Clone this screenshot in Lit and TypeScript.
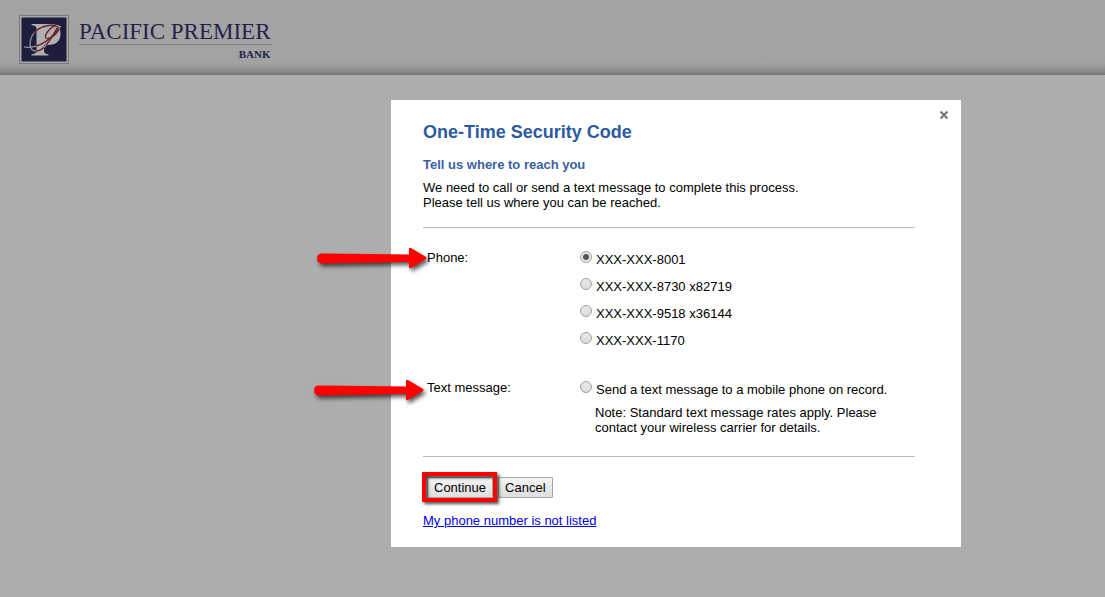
import { LitElement, html, css, svg } from "lit";
import { customElement, state } from "lit/decorators.js";

const PHONES = [
  { id: "p1", label: "XXX-XXX-8001" },
  { id: "p2", label: "XXX-XXX-8730 x82719" },
  { id: "p3", label: "XXX-XXX-9518 x36144" },
  { id: "p4", label: "XXX-XXX-1170" },
];

@customElement("bank-header")
class BankHeader extends LitElement {
  static styles = css`
    :host {
      display: block;
    }
    .bar {
      box-sizing: border-box;
      display: flex;
      align-items: flex-start;
      gap: 10px;
      height: 75px;
      padding: 15px 19px 0;
      background: linear-gradient(#a3a3a3 0, #a3a3a3 62px, #9a9a9a 66px, #868686 72px, #777 75px);
    }
    .mark {
      display: block;
      width: 50px;
      height: 49px;
    }
    .name {
      display: flex;
      flex-direction: column;
      padding-top: 4px;
      color: #23234a;
      font-family: "Liberation Serif", serif;
    }
    .title {
      padding: 0 1px 0 0;
      border-bottom: 1px solid #7f7f84;
      font-size: 23px;
      line-height: 25px;
    }
    .sub {
      padding: 2px 1px 0 0;
      font-size: 11px;
      font-weight: bold;
      line-height: 14px;
      text-align: right;
    }
  `;

  render() {
    return html`
      <header class="bar">
        <svg class="mark" viewBox="0 0 50 49" aria-hidden="true">
          <defs>
            <clipPath id="inner">
              <path d="M12 9H30Q42 9.500 42 19Q41 30 29 30H25V40H17V30H15V14H12Z" />
            </clipPath>
          </defs>
          <rect x="0.5" y="0.5" width="49" height="48" fill="#a9a9a9" stroke="#77777c" />
          <rect x="2.500" y="2.500" width="45" height="44" fill="#1e1d3e" />
          <path
            d="M12.500 9H30Q42 9.500 41.500 19Q41 30 29 30H25V36Q25 39 29.500 39.300V40.500H12.500V39.300Q17.500 39 17.500 36V13Q17 10.500 12.500 10Z"
            fill="#b0b0b0"
          />
          <g fill="none" stroke="#9c9ca4" stroke-width="1.200">
            <path d="M5 32C19 34 30 25 36 18C39 14 40 11 37 11C32 11 24 21 27 23C31 25 40 18 41 11" />
            <path d="M42 12C38 9 22 9 15 18C9 26 10 36 17 36C24 36 28 29 33 22L38 13" />
          </g>
          <g fill="none" stroke="#6c2229" stroke-width="1.300" clip-path="url(#inner)">
            <path d="M17 31C25 29 31 24 36 18C39 14 40 11 37 11C32 11 24 21 27 23C31 25 40 18 41 11" />
            <path d="M42 12C38 9 22 9 15 18C9 26 10 36 17 36C24 36 28 29 33 22L38 13" />
          </g>
        </svg>
        <div class="name">
          <span class="title">PACIFIC PREMIER</span>
          <span class="sub">BANK</span>
        </div>
      </header>
    `;
  }
}

@customElement("security-dialog")
class SecurityDialog extends LitElement {
  @state() private choice = "p1";

  static styles = css`
    :host {
      display: block;
      width: 570px;
      max-width: 100%;
    }
    .dialog {
      position: relative;
      box-sizing: border-box;
      padding: 20px 46px 19px 32px;
      background: #fff;
      color: #000;
      font: 13px/15px "Liberation Sans", Arial, sans-serif;
    }
    h1 {
      margin: 0;
      color: #2c5ba0;
      font-size: 18px;
      line-height: 24px;
    }
    h2 {
      margin: 13px 0 8px;
      color: #3a5fa3;
      font-size: 13px;
      line-height: 15px;
    }
    p {
      margin: 0;
    }
    .close {
      position: absolute;
      top: 10px;
      right: 12px;
      width: 10px;
      height: 10px;
      padding: 0;
      border: 0;
      background: none;
    }
    .close svg {
      display: block;
    }
    .options {
      display: flex;
      flex-direction: column;
      gap: 31px;
      margin-top: 17px;
      padding: 22px 0 21px;
      border-top: 1px solid #b9b9b9;
      border-bottom: 1px solid #b9b9b9;
    }
    .group {
      position: relative;
      display: grid;
      grid-template-columns: 153px 1fr;
      padding-left: 4px;
    }
    .arrow {
      position: absolute;
      right: 100%;
      top: -8px;
      width: 114px;
      height: 32px;
      margin-right: -5px;
      overflow: visible;
      filter: drop-shadow(2px 3px 2px rgb(0 0 0 / 65%));
    }
    .arrow.lower {
      top: -6px;
      margin-right: -2px;
    }
    .choices {
      display: flex;
      flex-direction: column;
      gap: 9px;
    }
    .choice {
      display: flex;
      align-items: flex-start;
      gap: 4px;
    }
    .choice span {
      padding-top: 2px;
      line-height: 16px;
    }
    input {
      appearance: none;
      flex: none;
      box-sizing: border-box;
      width: 12px;
      height: 12px;
      margin: 1px 0 0;
      border: 1px solid #a2a2a2;
      border-radius: 50%;
      background: linear-gradient(#e9e9e9, #dcdcdc);
    }
    input:checked {
      background: radial-gradient(circle, #555 0 2.5px, #e6e6e6 3.5px);
    }
    .note {
      margin-top: -2px;
      padding-left: 15px;
    }
    .actions {
      display: flex;
      gap: 5px;
      margin: 20px 0 15px;
      padding-left: 4px;
    }
    .highlight {
      position: relative;
      display: flex;
    }
    .highlight::after {
      content: "";
      position: absolute;
      inset: -5px -4px -4px -5px;
      border: 4px solid #f00;
      box-shadow: 2px 2px 3px rgb(0 0 0 / 70%), inset 2px 2px 3px rgb(0 0 0 / 70%);
      pointer-events: none;
    }
    .button {
      box-sizing: border-box;
      height: 21px;
      padding: 0 6px;
      border: 1px solid #a6a6a6;
      border-radius: 1px;
      background: linear-gradient(#f5f5f5, #dedede);
      color: #000;
      font: inherit;
    }
    a {
      color: #00e;
    }
  `;

  private arrow(cls: string) {
    return html`<svg class=${cls} viewBox="0 0 114 32" aria-hidden="true">
      ${svg`<path d="M8 11.500L95 12.500V7Q95 5 97 6L112 15Q113 16 112 17L97 26Q95 27 95 25V20L8 21.500Q3 21 3 16.500Q3 11.500 8 11.500Z" fill="#f00" />`}
    </svg>`;
  }

  private option(id: string, label: string) {
    return html`<label class="choice">
      <input type="radio" name="contact" .checked=${this.choice === id} @change=${() => (this.choice = id)} />
      <span>${label}</span>
    </label>`;
  }

  render() {
    return html`
      <section class="dialog" role="dialog" aria-labelledby="heading">
        <button class="close" aria-label="Close">
          <svg width="10" height="10" viewBox="0 0 10 10">
            <path d="M1.500 1.500L8.500 8.500M8.500 1.500L1.500 8.500" stroke="#777" stroke-width="2.200" />
          </svg>
        </button>
        <h1 id="heading">One-Time Security Code</h1>
        <h2>Tell us where to reach you</h2>
        <p>
          We need to call or send a text message to complete this process.<br />
          Please tell us where you can be reached.
        </p>
        <div class="options">
          <div class="group" role="group" aria-labelledby="phone">
            ${this.arrow("arrow")}
            <span id="phone">Phone:</span>
            <div class="choices">${PHONES.map((p) => this.option(p.id, p.label))}</div>
          </div>
          <div class="group" role="group" aria-labelledby="text">
            ${this.arrow("arrow lower")}
            <span id="text">Text message:</span>
            <div class="choices">
              ${this.option("sms", "Send a text message to a mobile phone on record.")}
              <p class="note">
                Note: Standard text message rates apply. Please contact your wireless carrier for details.
              </p>
            </div>
          </div>
        </div>
        <div class="actions">
          <span class="highlight"><button class="button">Continue</button></span>
          <button class="button">Cancel</button>
        </div>
        <a href="#">My phone number is not listed</a>
      </section>
    `;
  }
}

@customElement("app-root")
class AppRoot extends LitElement {
  static styles = css`
    :host {
      display: block;
      min-height: 100vh;
      background: #adadad;
    }
    .stage {
      display: flex;
      justify-content: flex-end;
      padding: 25px 144px 50px 24px;
    }
  `;

  render() {
    return html`
      <bank-header></bank-header>
      <main class="stage"><security-dialog></security-dialog></main>
    `;
  }
}
